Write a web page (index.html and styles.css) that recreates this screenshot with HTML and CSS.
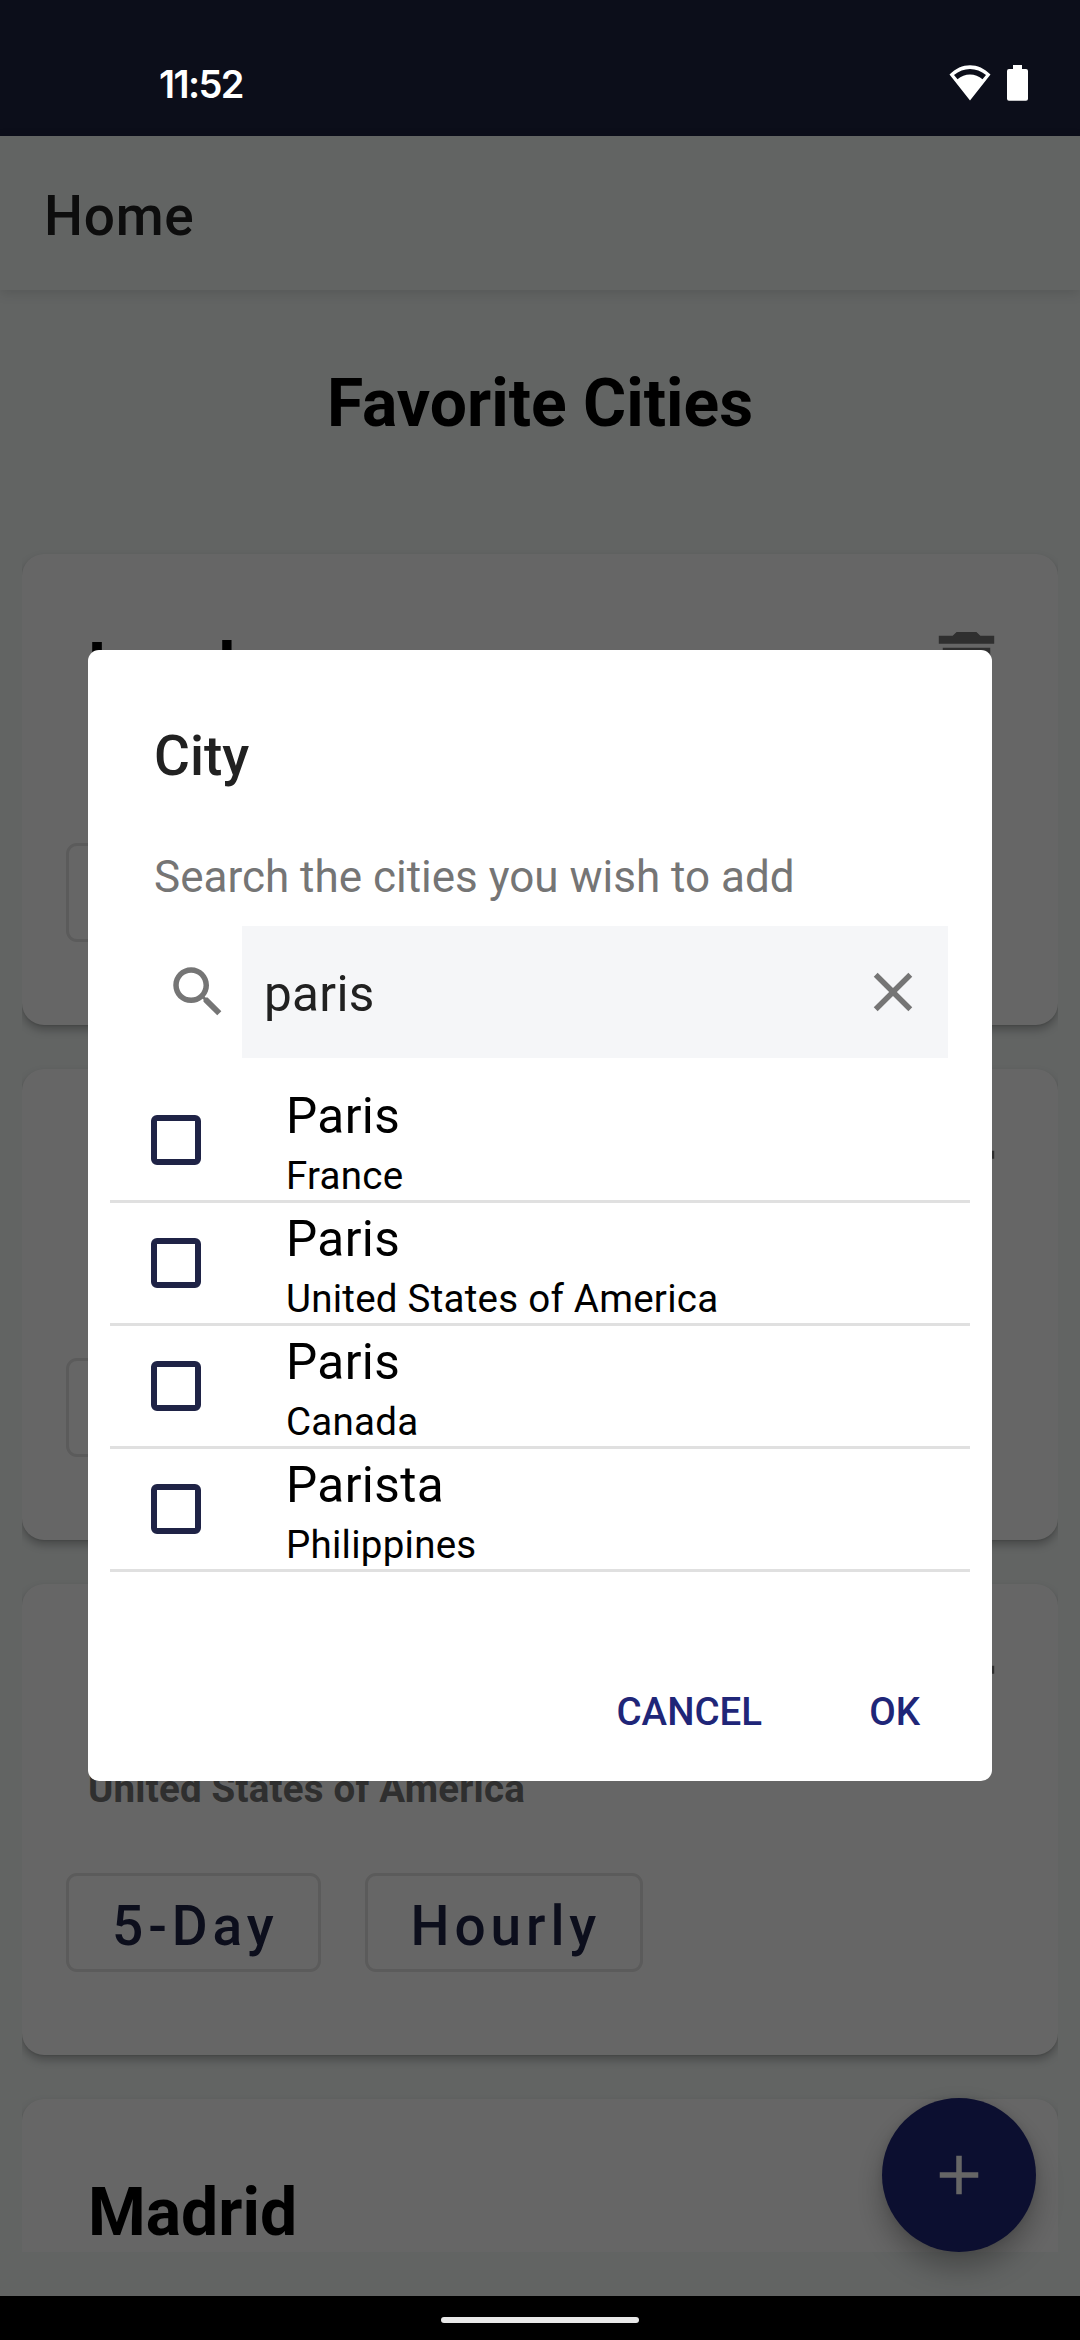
FILE: index.html
```html
<!DOCTYPE html>
<html lang="en">
<head>
<meta charset="utf-8">
<title>Home</title>
<link rel="stylesheet" href="styles.css">
</head>
<body>
<svg class="defs" aria-hidden="true">
  <symbol id="trash" viewBox="0 0 24 24"><path d="M6 19c0 1.1.9 2 2 2h8c1.1 0 2-.9 2-2V7H6v12zM19 4h-3.5l-1-1h-5l-1 1H5v2h14V4z"/></symbol>
</svg>
<div class="screen">
  <div class="status">
    <span class="clock">11:52</span>
    <div class="status-icons">
      <svg class="wifi" viewBox="0 0 42 36"><path fill="#fff" fill-rule="evenodd" d="M0.500 9.500C12.500-3 29.500-3 41.500 9.500L21 35.500ZM5 10L8.500 14.200C15.500 7.800 26.500 7.800 33.500 14.200L37 10C27.500 2 14.500 2 5 10Z"/></svg>
      <svg class="battery" viewBox="0 0 21 36"><path fill="#fff" d="M6 0h9v4h4a2 2 0 0 1 2 2v27.700a2 2 0 0 1-2 2H2a2 2 0 0 1-2-2V6a2 2 0 0 1 2-2h4z"/></svg>
    </div>
  </div>

  <div class="app">
    <header class="appbar"><h1>Home</h1></header>
    <main class="content">
      <h2 class="heading">Favorite Cities</h2>
      <div class="list">
        <article class="card">
          <div class="card-head"><div><h3>London</h3></div><svg class="trash"><use href="#trash"/></svg></div>
          <div class="actions"><div class="outline"></div></div>
        </article>
        <article class="card">
          <div class="card-head"><div></div><svg class="trash"><use href="#trash"/></svg></div>
          <div class="actions"><div class="outline"></div></div>
        </article>
        <article class="card">
          <div class="card-head"><div class="country"><p>United States of America</p></div><svg class="trash"><use href="#trash"/></svg></div>
          <div class="actions"><button>5-Day</button><button>Hourly</button></div>
        </article>
        <article class="card">
          <div class="card-head"><div><h3>Madrid</h3></div></div>
        </article>
      </div>
    </main>
    <div class="fab"><svg viewBox="0 0 24 24"><path d="M19 13h-6v6h-2v-6H5v-2h6V5h2v6h6z"/></svg></div>

    <div class="scrim">
      <section class="dialog">
        <h2>City</h2>
        <p class="hint">Search the cities you wish to add</p>
        <div class="search">
          <svg class="icon" viewBox="0 0 24 24"><path d="M15.500 14h-.79l-.28-.27C15.410 12.590 16 11.110 16 9.500 16 5.910 13.090 3 9.500 3S3 5.910 3 9.500 5.910 16 9.500 16c1.610 0 3.090-.59 4.230-1.570l.27.28v.79l5 4.990L20.490 19l-4.990-5zm-6 0C7.010 14 5 11.990 5 9.500S7.010 5 9.500 5 14 7.010 14 9.500 11.990 14 9.500 14z"/></svg>
          <div class="field"><span>paris</span>
            <svg class="icon" viewBox="0 0 24 24"><path d="M19 6.410L17.590 5 12 10.590 6.410 5 5 6.410 10.590 12 5 17.590 6.410 19 12 13.410 17.590 19 19 17.590 13.410 12z"/></svg>
          </div>
        </div>
        <ul class="results">
          <li><i class="box"></i><div><b>Paris</b><span>France</span></div></li>
          <li><i class="box"></i><div><b>Paris</b><span>United States of America</span></div></li>
          <li><i class="box"></i><div><b>Paris</b><span>Canada</span></div></li>
          <li><i class="box"></i><div><b>Parista</b><span>Philippines</span></div></li>
        </ul>
        <div class="buttons"><span>CANCEL</span><span>OK</span></div>
      </section>
    </div>
  </div>

  <div class="nav"><div class="pill"></div></div>
</div>
</body>
</html>
```
FILE: styles.css
```css
* { box-sizing: border-box; margin: 0; padding: 0; }
body { font-family: Roboto, sans-serif; background: #000; }
.defs { display: none; }
.screen { width: 1080px; height: 2340px; display: flex; flex-direction: column; overflow: hidden; }

.status { height: 136px; flex: none; background: #0c0e1a; display: flex; justify-content: space-between; padding: 62px 52px 0 159px; color: #fff; }
.clock { font: 600 38px/45px Inter, sans-serif; letter-spacing: -1.6px; }
.status-icons { display: flex; gap: 16px; padding-top: 3px; }
.wifi { width: 42px; height: 36px; }
.battery { width: 21px; height: 36px; }

.app { position: relative; flex: 1; min-height: 0; background: #f4f9f7; display: flex; flex-direction: column; }
.appbar { height: 154px; flex: none; padding: 0 44px; display: flex; align-items: center; background: #f4f9f7; box-shadow: 0 3px 12px rgba(0,0,0,.12); }
.appbar h1 { font-size: 55px; font-weight: 500; line-height: 64px; color: #212121; letter-spacing: .7px; padding-top: 6px; }
.content { flex: 1; min-height: 0; display: flex; flex-direction: column; padding: 0 22px 44px; }
.heading { flex: none; height: 242px; padding-top: 75px; text-align: center; font-size: 66px; line-height: 77px; font-weight: 700; color: #000; }
.list { flex: 1; min-height: 0; overflow: hidden; display: flex; flex-direction: column; gap: 44px; padding-top: 22px; }
.card { flex: none; height: 471px; border-radius: 22px; background: #fff; box-shadow: 0 5px 9px rgba(0,0,0,.26), 0 1px 2px rgba(0,0,0,.1); padding: 66px 44px 0; }
.card-head { display: flex; justify-content: space-between; height: 223px; padding: 9px 0 0 22px; }
.card h3 { font-size: 66px; line-height: 77px; font-weight: 700; color: #000; }
.country { padding-top: 107px; }
.card p { font-size: 38.5px; line-height: 45px; font-weight: 700; letter-spacing: .2px; color: #757575; }
.trash { width: 95px; height: 95px; margin-top: -9px; fill: #757575; }
.actions { display: flex; gap: 44px; }
.actions button, .outline { height: 99px; border: 3px solid #e3e3e3; border-radius: 11px; background: #fff; }
.actions button { padding: 7px 39px 0 43px; font: 500 55px/64px Roboto, sans-serif; letter-spacing: 4.9px; color: #1f2346; }
.outline { width: 255px; }

.fab { position: absolute; right: 44px; bottom: 44px; width: 154px; height: 154px; border-radius: 50%; background: #1f2678; display: flex; align-items: center; justify-content: center; box-shadow: 0 16px 28px rgba(0,0,0,.28), 0 0 8px rgba(0,0,0,.1); }
.fab svg { width: 66px; height: 66px; fill: #fff; }

.scrim { position: absolute; inset: 0; background: rgba(0,0,0,.6); display: flex; align-items: center; justify-content: center; padding-bottom: 1px; }
.dialog { width: 904px; height: 1131px; border-radius: 11px; background: #fff; display: flex; flex-direction: column; }
.dialog h2 { font-size: 55px; line-height: 64px; font-weight: 500; color: #212121; padding: 74px 66px 0; }
.hint { font-size: 44px; line-height: 52px; color: #757575; padding: 63px 66px 0; }
.search { display: flex; align-items: center; margin-top: 23px; padding: 0 44px 0 77px; height: 132px; }
.icon { width: 66px; height: 66px; fill: #757575; flex: none; }
.field { margin-left: 11px; flex: 1; height: 132px; background: #f5f6f8; display: flex; align-items: center; justify-content: space-between; padding: 0 22px; font-size: 49.5px; letter-spacing: .3px; color: #212121; }
.field span { padding-top: 3px; }
.results { list-style: none; margin-top: 22px; padding: 0 22px; }
.results li { height: 123px; border-bottom: 3px solid #e0e0e0; display: flex; padding-left: 41px; }
.box { width: 50px; height: 50px; border: 6px solid #1f2346; border-radius: 6px; margin: 35px 85px 0 0; }
.results div { display: flex; flex-direction: column; }
.results b { font-weight: 400; font-size: 49.5px; line-height: 58px; letter-spacing: .4px; padding-top: 7px; color: #000; }
.results span { font-size: 38.5px; line-height: 45px; letter-spacing: .25px; padding-top: 8px; color: #000; }
.buttons { display: flex; justify-content: flex-end; gap: 107px; padding: 117px 72px 0 0; font-weight: 500; font-size: 38.5px; line-height: 45px; color: #1f2678; }

.nav { height: 44px; flex: none; background: #000; display: flex; justify-content: center; padding-top: 21px; }
.pill { width: 198px; height: 6px; border-radius: 3px; background: #e8e8e8; }
```
